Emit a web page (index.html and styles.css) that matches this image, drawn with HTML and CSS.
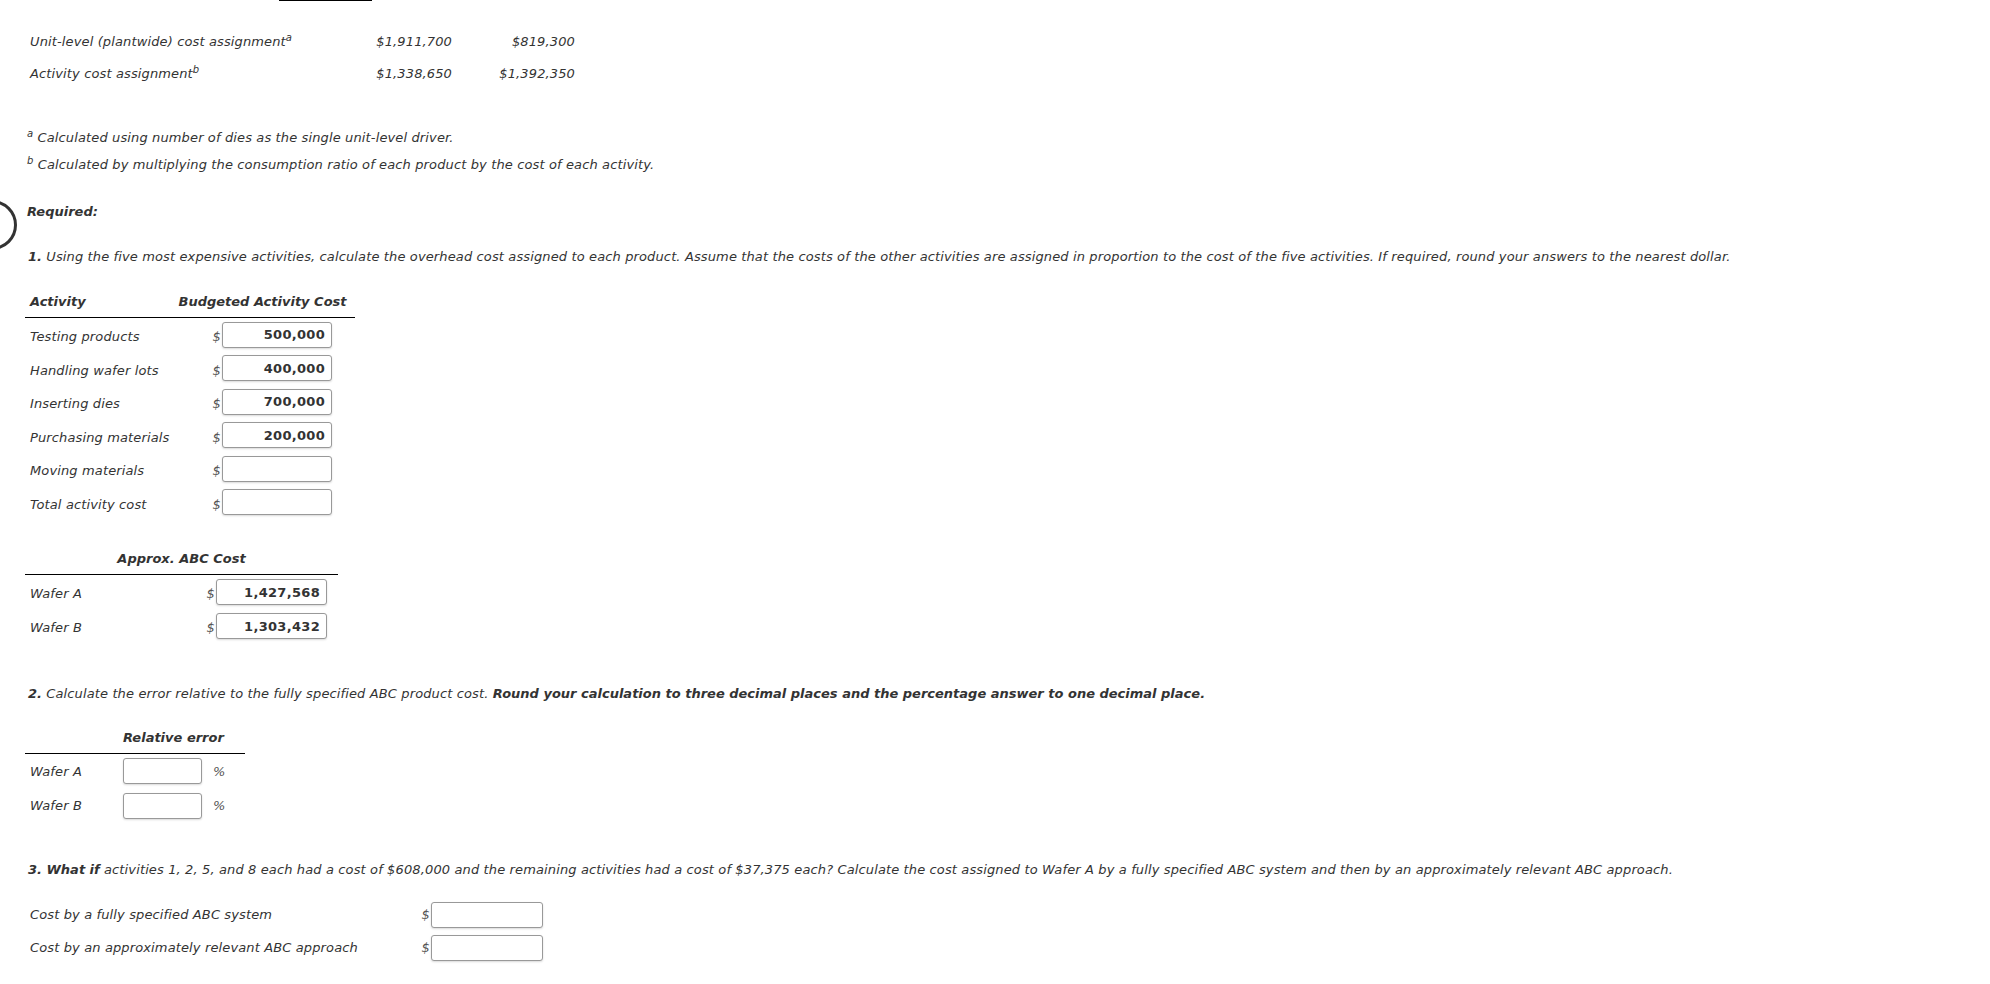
FILE: index.html
```html
<!DOCTYPE html>
<html lang="en">
<head>
    <meta charset="UTF-8">
    <title>Approximately Relevant ABC</title>
    <link rel="stylesheet" href="styles.css">
</head>
<body>
    <div class="marker"></div>

    <div class="page">
        <div class="top-rule"></div>

        <table class="summary">
            <colgroup><col class="s-label"><col class="s-a"><col class="s-b"></colgroup>
            <tr>
                <td>Unit-level (plantwide) cost assignment<sup>a</sup></td>
                <td class="num">$1,911,700</td>
                <td class="num">$819,300</td>
            </tr>
            <tr>
                <td>Activity cost assignment<sup>b</sup></td>
                <td class="num">$1,338,650</td>
                <td class="num">$1,392,350</td>
            </tr>
        </table>

        <div class="notes">
            <p><sup>a</sup> Calculated using number of dies as the single unit-level driver.</p>
            <p><sup>b</sup> Calculated by multiplying the consumption ratio of each product by the cost of each activity.</p>
        </div>

        <p class="required">Required:</p>

        <p class="question q1"><b>1.</b> Using the five most expensive activities, calculate the overhead cost assigned to each product. Assume that the costs of the other activities are assigned in proportion to the cost of the five activities. If required, round your answers to the nearest dollar.</p>

        <table class="grid activity">
            <colgroup><col style="width:145px"><col style="width:52px"><col style="width:133px"></colgroup>
            <thead>
                <tr>
                    <th class="left">Activity</th>
                    <th colspan="2" class="center">Budgeted Activity Cost</th>
                </tr>
            </thead>
            <tbody>
                <tr><td class="label">Testing products</td><td class="cur">$</td><td><input class="box w110" type="text" value="500,000"></td></tr>
                <tr><td class="label">Handling wafer lots</td><td class="cur">$</td><td><input class="box w110" type="text" value="400,000"></td></tr>
                <tr><td class="label">Inserting dies</td><td class="cur">$</td><td><input class="box w110" type="text" value="700,000"></td></tr>
                <tr><td class="label">Purchasing materials</td><td class="cur">$</td><td><input class="box w110" type="text" value="200,000"></td></tr>
                <tr><td class="label">Moving materials</td><td class="cur">$</td><td><input class="box w110" type="text"></td></tr>
                <tr><td class="label">Total activity cost</td><td class="cur">$</td><td><input class="box w110" type="text"></td></tr>
            </tbody>
        </table>

        <table class="grid approx">
            <colgroup><col style="width:180px"><col style="width:11px"><col style="width:122px"></colgroup>
            <thead>
                <tr><th colspan="3" class="center">Approx. ABC Cost</th></tr>
            </thead>
            <tbody>
                <tr><td class="label">Wafer A</td><td class="cur">$</td><td><input class="box w111" type="text" value="1,427,568"></td></tr>
                <tr><td class="label">Wafer B</td><td class="cur">$</td><td><input class="box w111" type="text" value="1,303,432"></td></tr>
            </tbody>
        </table>

        <p class="question q2"><b>2.</b> Calculate the error relative to the fully specified ABC product cost. <b>Round your calculation to three decimal places and the percentage answer to one decimal place.</b></p>

        <table class="grid relerr">
            <colgroup><col style="width:98px"><col style="width:84px"><col style="width:38px"></colgroup>
            <thead>
                <tr><th></th><th colspan="2" class="left">Relative error</th></tr>
            </thead>
            <tbody>
                <tr><td class="label">Wafer A</td><td><input class="box w79" type="text"></td><td class="pct">%</td></tr>
                <tr><td class="label">Wafer B</td><td><input class="box w79" type="text"></td><td class="pct">%</td></tr>
            </tbody>
        </table>

        <p class="question q3"><b>3. What if</b> activities 1, 2, 5, and 8 each had a cost of $608,000 and the remaining activities had a cost of $37,375 each? Calculate the cost assigned to Wafer A by a fully specified ABC system and then by an approximately relevant ABC approach.</p>

        <table class="grid whatif">
            <colgroup><col style="width:370px"><col style="width:36px"><col style="width:120px"></colgroup>
            <tbody>
                <tr><td class="label">Cost by a fully specified ABC system</td><td class="cur">$</td><td><input class="box w112" type="text"></td></tr>
                <tr><td class="label">Cost by an approximately relevant ABC approach</td><td class="cur">$</td><td><input class="box w112" type="text"></td></tr>
            </tbody>
        </table>
    </div>
</body>
</html>
```

FILE: styles.css
```css
body {
    margin: 0;
    font-family: "DejaVu Sans", Verdana, sans-serif;
    font-size: 13px;
    font-style: italic;
    letter-spacing: 0.13px;
    color: #333;
    background-color: #ffffff;
}

b, th, .required {
    letter-spacing: 0;
}

.page {
    padding-left: 25px;
}

/* partial circle sitting on the left edge */
.marker {
    position: absolute;
    left: -33px;
    top: 200px;
    width: 44px;
    height: 44px;
    border: 3px solid #333;
    border-radius: 50%;
}

.top-rule {
    width: 93px;
    margin-left: 254px;
    border-top: 1px solid #000;
}

table {
    border-collapse: collapse;
    table-layout: fixed;
}

td, th {
    padding: 0;
}

sup {
    font-size: 10px;
    line-height: 0;
}

.summary {
    margin-top: 24px;
    width: 550px;
}

.summary .s-label { width: 322px; }
.summary .s-a { width: 105px; }
.summary .s-b { width: 123px; }

.summary td {
    height: 32px;
    padding-left: 5px;
}

.summary .num {
    text-align: right;
    padding-left: 0;
}

.notes {
    margin-top: 35px;
}

.notes p {
    margin: 0;
    height: 27px;
    line-height: 27px;
    padding-left: 2px;
}

.required {
    margin: 25px 0 0 2px;
    font-weight: bold;
    line-height: 18px;
}

.question {
    margin: 0 0 0 3px;
    line-height: 18px;
}

.q1 { margin-top: 27px; }
.q2 { margin-top: 42px; }
.q3 { margin-top: 38px; }

.grid th {
    font-weight: bold;
    border-bottom: 1px solid #000;
    height: 32px;
}

.grid th.left {
    text-align: left;
    padding-left: 5px;
}

.grid th.center {
    text-align: center;
}

.grid td.label {
    padding-left: 5px;
}

.grid td.cur {
    text-align: right;
    padding-right: 1px;
    color: #555;
}

.grid td.pct {
    padding-left: 6px;
    color: #555;
}

.activity {
    margin-top: 19px;
    width: 330px;
}

.activity td {
    height: 33.5px;
}

.activity td.label,
.activity td.cur {
    padding-top: 4px;
    height: 29.5px;
}

.approx {
    margin-top: 23px;
    width: 313px;
}

.approx td {
    height: 34px;
}

.approx td.label,
.approx td.cur {
    padding-top: 2px;
    height: 32px;
}

.relerr {
    margin-top: 18px;
    width: 220px;
}

.relerr th.left {
    padding-left: 0;
}

.relerr td {
    height: 34.5px;
}

.whatif {
    margin-top: 19px;
    width: 526px;
}

.whatif td {
    height: 33px;
}

.box {
    display: block;
    box-sizing: border-box;
    height: 26px;
    padding: 0 6px;
    border: 1px solid #999;
    border-radius: 3px;
    box-shadow: 0 1px 2px rgba(0, 0, 0, 0.15);
    font-family: "DejaVu Sans", Verdana, sans-serif;
    font-size: 13px;
    font-weight: bold;
    font-style: normal;
    letter-spacing: 0.3px;
    color: #333;
    text-align: right;
    background-color: #fff;
}

.w79 { width: 79px; }
.w110 { width: 110px; }
.w111 { width: 111px; }
.w112 { width: 112px; }
```
